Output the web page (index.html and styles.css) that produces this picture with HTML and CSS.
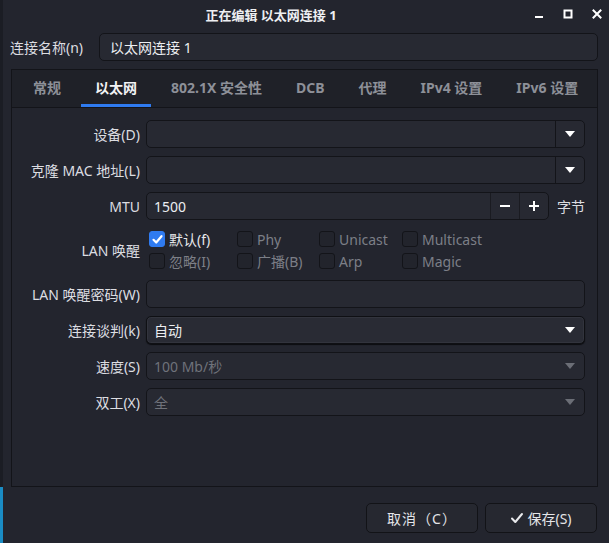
FILE: index.html
```html
<!DOCTYPE html>
<html lang="zh-CN">
<head>
<meta charset="utf-8">
<title>正在编辑 以太网连接 1</title>
<link rel="stylesheet" href="styles.css">
</head>
<body>
<div class="desk-edge"></div>
<div class="window">
  <header class="titlebar">
    <span class="tb-spacer"></span>
    <h1 class="title">正在编辑 以太网连接 1</h1>
    <div class="controls">
      <span class="ctl"><svg width="10" height="10" viewBox="0 0 10 10"><rect x="1" y="7" width="8" height="2" fill="#ffffff"/></svg></span>
      <span class="ctl"><svg width="10" height="10" viewBox="0 0 10 10"><rect x="1.5" y="1.5" width="7" height="7" fill="none" stroke="#ffffff" stroke-width="2"/></svg></span>
      <span class="ctl"><svg width="10" height="10" viewBox="0 0 10 10"><path d="M1.5 1.5 L8.5 8.5 M8.5 1.5 L1.5 8.5" stroke="#ffffff" stroke-width="2" stroke-linecap="square"/></svg></span>
    </div>
  </header>

  <div class="name-row">
    <label class="name-label">连接名称(n)</label>
    <div class="entry name-entry">以太网连接 1</div>
  </div>

  <section class="notebook">
    <nav class="tabs">
      <span class="tab">常规</span>
      <span class="tab active">以太网</span>
      <span class="tab">802.1X 安全性</span>
      <span class="tab">DCB</span>
      <span class="tab">代理</span>
      <span class="tab">IPv4 设置</span>
      <span class="tab">IPv6 设置</span>
    </nav>
    <div class="page">
      <div class="form">
        <label class="lbl">设备(D)</label>
        <div class="entry combo-entry">
          <div class="ce-text"></div>
          <div class="drop-btn"><svg width="10" height="6" viewBox="0 0 10 6"><path d="M0 0 H10 L5 6 Z" fill="#ffffff"/></svg></div>
        </div>

        <label class="lbl">克隆 MAC 地址(L)</label>
        <div class="entry combo-entry">
          <div class="ce-text"></div>
          <div class="drop-btn"><svg width="10" height="6" viewBox="0 0 10 6"><path d="M0 0 H10 L5 6 Z" fill="#ffffff"/></svg></div>
        </div>

        <label class="lbl">MTU</label>
        <div class="mtu-field">
          <div class="entry spin">
            <div class="spin-text">1500</div>
            <div class="spin-btn"><svg width="12" height="12" viewBox="0 0 12 12"><rect x="1" y="5" width="10" height="2" fill="#ffffff"/></svg></div>
            <div class="spin-btn"><svg width="12" height="12" viewBox="0 0 12 12"><rect x="1" y="5" width="10" height="2" fill="#ffffff"/><rect x="5" y="1" width="2" height="10" fill="#ffffff"/></svg></div>
          </div>
          <span class="unit">字节</span>
        </div>

        <label class="lbl">LAN 唤醒</label>
        <div class="checks">
          <div class="chk"><span class="box checked"><svg width="13" height="13" viewBox="0 0 13 13"><path d="M2.5 6.8 L5.2 9.5 L10.5 3.2" fill="none" stroke="#ffffff" stroke-width="2.2" stroke-linecap="round" stroke-linejoin="round"/></svg></span><span class="chk-text on">默认(f)</span></div>
          <div class="chk"><span class="box"></span><span class="chk-text">Phy</span></div>
          <div class="chk"><span class="box"></span><span class="chk-text">Unicast</span></div>
          <div class="chk"><span class="box"></span><span class="chk-text">Multicast</span></div>
          <div class="chk"><span class="box"></span><span class="chk-text">忽略(I)</span></div>
          <div class="chk"><span class="box"></span><span class="chk-text">广播(B)</span></div>
          <div class="chk"><span class="box"></span><span class="chk-text">Arp</span></div>
          <div class="chk"><span class="box"></span><span class="chk-text">Magic</span></div>
        </div>

        <label class="lbl">LAN 唤醒密码(W)</label>
        <div class="entry"></div>

        <label class="lbl">连接谈判(k)</label>
        <div class="combo-btn">
          <span>自动</span>
          <svg width="10" height="6" viewBox="0 0 10 6"><path d="M0 0 H10 L5 6 Z" fill="#ffffff"/></svg>
        </div>

        <label class="lbl">速度(S)</label>
        <div class="entry combo-dis">
          <span>100 Mb/秒</span>
          <svg width="10" height="6" viewBox="0 0 10 6"><path d="M0 0 H10 L5 6 Z" fill="#6b6e76"/></svg>
        </div>

        <label class="lbl">双工(X)</label>
        <div class="entry combo-dis">
          <span>全</span>
          <svg width="10" height="6" viewBox="0 0 10 6"><path d="M0 0 H10 L5 6 Z" fill="#6b6e76"/></svg>
        </div>
      </div>
    </div>
  </section>

  <footer class="actions">
    <button class="btn btn-cancel">取消（C）</button>
    <button class="btn"><svg width="14" height="14" viewBox="0 0 14 14"><path d="M2 7.5 L5.3 11 L12 3" fill="none" stroke="#e8e9ec" stroke-width="2" stroke-linecap="round" stroke-linejoin="round"/></svg>保存(S)</button>
  </footer>
</div>
</body>
</html>
```

FILE: styles.css
```css
* { box-sizing: border-box; }

html, body {
  margin: 0;
  padding: 0;
  height: 543px;
  overflow: hidden;
}

body {
  display: flex;
  background: #23252e;
  font-family: "Noto Sans", "Noto Sans CJK SC", sans-serif;
  font-size: 14px;
  color: #dcdde1;
}

.desk-edge {
  width: 3px;
  flex: none;
  background: linear-gradient(to bottom, #1b1d24 0, #1b1d24 487px, #1a8cc4 487px, #1a8cc4 100%);
}

.window {
  flex: 1;
  display: flex;
  flex-direction: column;
  background: #23252e;
}

/* title bar */
.titlebar {
  height: 28px;
  flex: none;
  display: grid;
  grid-template-columns: 1fr auto 1fr;
  align-items: center;
}
.title {
  margin: 0;
  font-size: 13px;
  font-weight: bold;
  color: #eeeff2;
  padding-right: 70px;
}
.controls {
  display: flex;
  justify-content: flex-end;
  gap: 19px;
  padding-right: 7px;
}
.ctl {
  width: 10px;
  height: 10px;
  display: flex;
}

/* name row */
.name-row {
  display: flex;
  align-items: center;
  gap: 12px;
  margin-top: 5px;
  padding: 0 11px 0 7px;
}
.name-label {
  width: 77px;
  white-space: nowrap;
}
.entry {
  height: 28px;
  background: #272932;
  border: 1px solid #131419;
  border-radius: 5px;
}
.name-entry {
  flex: 1;
  display: flex;
  align-items: center;
  padding-left: 10px;
  color: #eceef1;
}

/* notebook */
.notebook {
  margin: 8px 11px 0 8px;
  height: 418px;
  flex: none;
  border: 1px solid #131419;
  display: flex;
  flex-direction: column;
}
.tabs {
  height: 38px;
  flex: none;
  display: flex;
  align-items: stretch;
  gap: 6px;
  padding-left: 7px;
  background: #1f2128;
  border-bottom: 1px solid #131419;
}
.tab {
  display: flex;
  align-items: center;
  padding: 0 14px;
  font-weight: bold;
  color: #8d9098;
  border-bottom: 3px solid transparent;
  white-space: nowrap;
}
.tab.active {
  color: #f2f3f5;
  border-bottom-color: #2f7bf0;
}

.page {
  flex: 1;
  padding: 12px 12px 0 12px;
}
.form {
  display: grid;
  grid-template-columns: 116px 1fr;
  grid-template-rows: 28px 28px 28px 44px 28px 28px 28px 28px;
  column-gap: 6px;
  row-gap: 8px;
}
.lbl {
  justify-self: end;
  align-self: center;
  white-space: nowrap;
}

.combo-entry {
  display: flex;
}
.ce-text { flex: 1; }
.drop-btn {
  width: 29px;
  border-left: 1px solid #131419;
  display: flex;
  align-items: center;
  justify-content: center;
}

/* MTU spin */
.mtu-field {
  display: flex;
  align-items: center;
  gap: 8px;
}
.spin {
  flex: 1;
  display: flex;
}
.spin-text {
  flex: 1;
  display: flex;
  align-items: center;
  padding-left: 7px;
  color: #eceef1;
}
.spin-btn {
  width: 29px;
  border-left: 1px solid #1a1b21;
  display: flex;
  align-items: center;
  justify-content: center;
}
.unit {
  width: 28px;
  white-space: nowrap;
}

/* checkboxes */
.checks {
  display: grid;
  grid-template-columns: 88px 82px 83px auto;
  grid-template-rows: 22px 22px;
  padding-left: 3px;
}
.chk {
  display: flex;
  align-items: center;
  gap: 4px;
}
.box {
  width: 16px;
  height: 16px;
  border-radius: 3px;
  background: #22242c;
  border: 1px solid #131419;
  display: flex;
  align-items: center;
  justify-content: center;
}
.box.checked {
  background: #2f7bf0;
  border-color: #2f7bf0;
}
.chk-text {
  color: #7c7f87;
  white-space: nowrap;
}
.chk-text.on { color: #e6e7ea; }

/* combos */
.combo-btn {
  display: flex;
  align-items: center;
  justify-content: space-between;
  padding: 0 9px 0 7px;
  background: #292b34;
  border: 1px solid #0f1014;
  border-radius: 5px;
  box-shadow: inset 0 0 0 1px #32343d, 0 1px 1px #0c0d10;
  color: #eceef1;
}
.combo-dis {
  display: flex;
  align-items: center;
  justify-content: space-between;
  padding: 0 9px 0 7px;
  color: #6f727a;
}

/* footer */
.actions {
  display: flex;
  justify-content: flex-end;
  gap: 7px;
  padding: 16px 12px 0 0;
}
.btn {
  width: 112px;
  height: 30px;
  background: #262830;
  border: 1px solid #121317;
  border-radius: 5px;
  color: #e4e5e8;
  font-family: "Noto Sans", "Noto Sans CJK SC", sans-serif;
  font-size: 14px;
  display: flex;
  align-items: center;
  justify-content: center;
  gap: 3px;
  padding: 0;
}
.btn-cancel { letter-spacing: 1px; }
```
